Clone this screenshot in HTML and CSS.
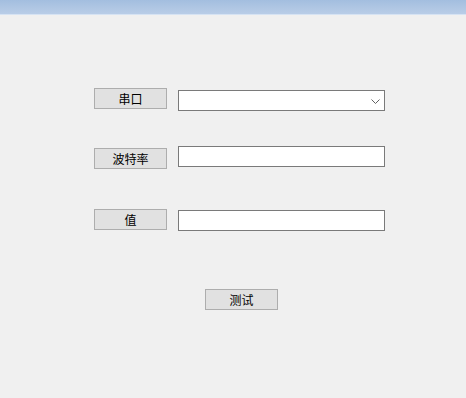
FILE: index.html
```html
<!DOCTYPE html>
<html lang="zh">
<head>
<meta charset="utf-8">
<link rel="stylesheet" href="styles.css">
</head>
<body>
<div class="titlebar"></div>
<main class="form">
  <div class="row row-port">
    <div class="label-btn">串口</div>
    <div class="field select">
      <svg class="chev" width="9" height="5" viewBox="0 0 9 5"><path d="M0.5 0.5 L4.5 4.5 L8.5 0.5" fill="none" stroke="#606060" stroke-width="1"/></svg>
    </div>
  </div>
  <div class="row row-baud">
    <div class="label-btn">波特率</div>
    <div class="field"></div>
  </div>
  <div class="row row-val">
    <div class="label-btn">值</div>
    <div class="field"></div>
  </div>
  <div class="actions">
    <div class="label-btn test">测试</div>
  </div>
</main>
</body>
</html>
```
FILE: styles.css
```css
html, body {
  margin: 0;
  padding: 0;
  background: #f0f0f0;
  width: 466px;
  height: 398px;
  overflow: hidden;
  font-family: "Noto Sans CJK SC", "Microsoft YaHei", sans-serif;
  font-size: 12px;
  color: #000;
}
.titlebar {
  height: 14px;
  background: linear-gradient(#a3bedf, #b9cde7);
  border-bottom: 1px solid #d6e3f3;
}
.form {
  display: flex;
  flex-direction: column;
  padding-left: 94px;
}
.row {
  display: flex;
  align-items: flex-start;
  gap: 11px;
}
.row-port { margin-top: 73px; }
.row-port .field { margin-top: 2px; }
.row-baud { margin-top: 35px; }
.row-baud .label-btn { margin-top: 2px; }
.row-val { margin-top: 40px; }
.row-val .field { margin-top: 1px; }
.label-btn {
  box-sizing: border-box;
  width: 73px;
  height: 21px;
  background: #e1e1e1;
  border: 1px solid #adadad;
  display: flex;
  align-items: center;
  justify-content: center;
  line-height: 1;
}
.field {
  box-sizing: border-box;
  width: 207px;
  height: 21px;
  background: #fff;
  border: 1px solid #7a7a7a;
}
.select {
  display: flex;
  align-items: center;
  justify-content: flex-end;
  padding-right: 4px;
}
.chev { display: block; margin-top: 1px; }
.actions {
  display: flex;
  padding-left: 111px;
  margin-top: 58px;
}
```
